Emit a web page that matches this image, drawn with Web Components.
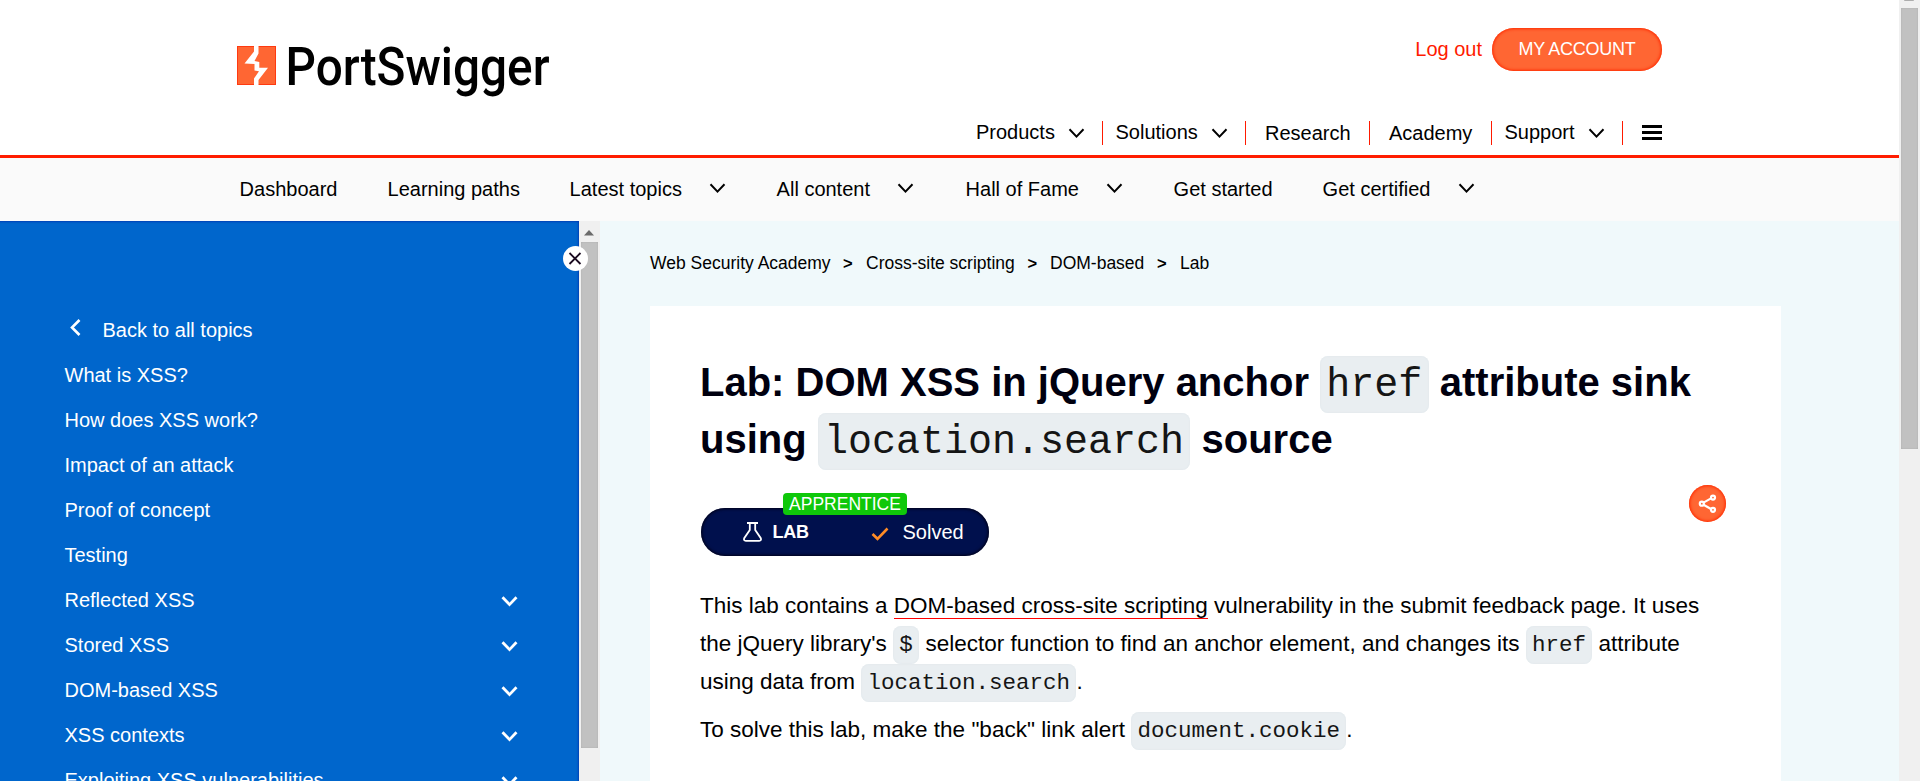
<!DOCTYPE html>
<html lang="en">
<head>
<meta charset="utf-8">
<title>Lab: DOM XSS in jQuery anchor href attribute sink</title>
<style>
html,body{margin:0;height:100%;overflow:hidden}
body{font-family:"Liberation Sans",Arial,sans-serif;color:#000;background:#fff}
</style>
</head>
<body>
<academy-page></academy-page>
<script>
const define = (name, html) => customElements.define(name, class extends HTMLElement {
  constructor() {
    super();
    const t = document.createElement('template');
    t.innerHTML = html;
    this.attachShadow({mode: 'open'}).append(t.content.cloneNode(true));
  }
});

define('chevron-icon', `<style>:host{display:block;width:17px;height:11px;flex:none}svg{display:block}</style>
<svg width="17" height="11" viewBox="0 0 17 11" fill="none" stroke="currentColor"><path d="M1.5 1.3 8.5 8.6 15.5 1.3" style="stroke-width:var(--stroke,2)"/></svg>`);

define('ps-logo', `<style>:host{display:block;width:330px;height:70px}svg{display:block;overflow:visible}</style>
<svg width="330" height="70" viewBox="0 0 330 70">
<rect x="0" y="6" width="39" height="39" fill="#ff3a10"/><rect x="1" y="7" width="37" height="37" fill="#ff6633"/>
<path d="M17 6H21.5V13.5L17.5 21 22.3 22V27.7H31L21.5 40V45H17V38.5L22 31.2 17.5 30.5V24L7.5 23.5 17 11.5Z" fill="#fff"/>
<text x="48.5" y="45" font-family="Roboto,sans-serif" font-size="54.5" font-weight="500" textLength="264" lengthAdjust="spacingAndGlyphs">PortSwigger</text></svg>`);

define('site-header', `<style>
:host{display:flex;flex-direction:column;height:155px;background:#fff;border-bottom:3px solid #ff1c00;font-size:20px}
.top{display:flex;justify-content:space-between;height:110px;padding:0 237px 0 237px}
ps-logo{margin-top:40px}
.acc{display:flex;align-items:flex-start;margin-top:28px;gap:10px}
.out{color:#ff1a00;line-height:43px}
.btn{width:170px;height:43px;line-height:42px;border-radius:22px;background:#ff6633;color:#fff;text-align:center;font-size:18px;letter-spacing:-.25px;box-shadow:inset 0 0 3px 1px #ff2a00}
nav{display:grid;grid-template-columns:127px 143px 124px 122px 131px 39px;justify-content:end;padding-right:237px;margin-top:11px;height:23px;line-height:23px}
.i{display:flex;align-items:center;border-right:1px solid #ff1a00;box-sizing:border-box;padding-left:12.5px;white-space:nowrap}
.i:first-child{padding-left:0}
.i span{margin-top:-1px}
chevron-icon{margin-left:13px}
.i.r{padding-left:19px}.i.r span{margin-top:1px}
.burger{display:flex;flex-direction:column;justify-content:space-between;height:15px;margin:4px 0 0 19px}
.burger i{height:3px;background:#000}
</style>
<div class="top"><ps-logo></ps-logo><div class="acc"><span class="out">Log out</span><span class="btn">MY ACCOUNT</span></div></div>
<nav><div class="i"><span>Products</span><chevron-icon></chevron-icon></div><div class="i"><span>Solutions</span><chevron-icon></chevron-icon></div><div class="i r"><span>Research</span></div><div class="i r"><span>Academy</span></div><div class="i"><span>Support</span><chevron-icon></chevron-icon></div><div class="burger"><i></i><i></i><i></i></div></nav>`);

define('academy-nav', `<style>
:host{display:grid;grid-template-columns:148px 182px 207px 189px 208px 149px 151px;height:63px;padding-left:239.6px;background:#fafafa;font-size:20px;line-height:63px;white-space:nowrap}
div{display:flex}
chevron-icon{margin:25px 0 0 27.4px}
</style>
<div>Dashboard</div><div>Learning paths</div><div>Latest topics<chevron-icon></chevron-icon></div><div>All content<chevron-icon></chevron-icon></div><div>Hall of Fame<chevron-icon></chevron-icon></div><div>Get started</div><div>Get certified<chevron-icon></chevron-icon></div>`);

define('scroll-bar', `<style>
:host{display:block;width:21px;background:#f0f0f0;flex:none;box-sizing:border-box;overflow:hidden}
svg{display:block;margin:var(--arrow-top) auto 0 5px;width:10px;height:6px}
div{width:17px;margin:var(--gap) auto 0;height:var(--thumb);background:#c1c1c1;box-shadow:inset 0 0 2px #aaa}
</style><svg viewBox="0 0 10 6"><path d="M0 5.5 5 0 10 5.5Z" fill="#6b6b6b"/></svg><div></div>`);

define('side-item', `<style>
:host{display:flex;align-items:center;justify-content:space-between;height:45px;color:#fff;font-size:20px;white-space:nowrap;--stroke:2.8}
chevron-icon{display:none}
:host([open]) chevron-icon{display:block;margin-top:1px}
</style><span><slot></slot></span><chevron-icon></chevron-icon>`);

define('topic-sidebar', `<style>
:host{display:flex;width:600px;flex:none;position:relative;height:560px}
.panel{width:579px;background:#0066cc;box-sizing:border-box;padding:87px 61px 0 64.5px;box-shadow:inset -2px 2px 2px -1px #003fb5}
.back{display:flex;align-items:center;height:45px;color:#fff;font-size:20px}
.back svg{margin:-6px 22px 0 5px}
scroll-bar{--arrow-top:9px;--gap:6px;--thumb:506px}
.close{position:absolute;left:563px;top:25px;width:25px;height:25px;border-radius:50%;background:#fff}
.close svg{display:block}
</style>
<div class="panel"><div class="back"><svg width="11" height="17" viewBox="0 0 11 17" fill="none" stroke="#fff" stroke-width="2.6"><path d="M9.5 1 2 8.5 9.5 16"/></svg><span>Back to all topics</span></div>
<side-item>What is XSS?</side-item><side-item>How does XSS work?</side-item><side-item>Impact of an attack</side-item><side-item>Proof of concept</side-item><side-item>Testing</side-item><side-item open>Reflected XSS</side-item><side-item open>Stored XSS</side-item><side-item open>DOM-based XSS</side-item><side-item open>XSS contexts</side-item><side-item open>Exploiting XSS vulnerabilities</side-item></div>
<scroll-bar></scroll-bar>
<div class="close"><svg width="25" height="25" viewBox="0 0 25 25" stroke="#1a0a20" stroke-width="1.8"><path d="M6.5 7 17.5 18M17.5 7 6.5 18"/></svg></div>`);

define('bread-crumbs', `<style>
:host{display:grid;grid-template-columns:193px 23px 161.5px 22.5px 107px 23px auto;height:85px;line-height:84px;font-size:17.5px;white-space:nowrap}
b{font-size:16.5px}
</style><span>Web Security Academy</span><b>&gt;</b><span>Cross-site scripting</span><b>&gt;</b><span>DOM-based</span><b>&gt;</b><span>Lab</span>`);

define('code-chip', `<style>
:host{display:inline-block;box-sizing:border-box;height:38px;line-height:39px;margin:1px 0 -1px;padding:0 6.25px;border-radius:8px;background:#e9eef1;box-shadow:inset 0 0 2px #dde5e9;color:#151515;font-family:"Liberation Mono","Courier New",monospace;font-weight:400;vertical-align:top}
:host([large]){height:57px;line-height:59px;margin:2px 0 -2px}
</style><slot></slot>`);

define('lab-status', `<style>
:host{display:flex;position:relative;box-sizing:border-box;width:288px;height:48px;border-radius:24px;background:#00104d;box-shadow:inset 0 0 3px 1px #000018;color:#fff;align-items:center;padding-left:42px;font-size:20px}
b{font-size:18px;width:98px;margin-left:10.5px;letter-spacing:-.2px}
.tag{position:absolute;left:82px;top:-15px;width:124px;height:22px;line-height:22px;border-radius:4px;background:#0fc80a;font-size:17.5px;text-align:center}
.s{margin-left:14px}
</style>
<svg width="19" height="20" viewBox="0 0 19 20" fill="none" stroke="#fff" stroke-width="1.8"><path d="M4 1H15M6.8 1V8L1.2 16.2Q.4 18.8 2.8 18.8H16.2Q18.6 18.8 17.8 16.2L12.2 8V1"/></svg>
<b>LAB</b><svg width="18" height="14" viewBox="0 0 18 14" fill="none" stroke="#ff8c26" stroke-width="2.6" style="margin-top:3px"><path d="M1.5 7 6.5 11.8 16.5 1.5"/></svg><span class="s">Solved</span><span class="tag">APPRENTICE</span>`);

define('share-button', `<style>:host{display:block;width:37px;height:37px;border-radius:50%;background:#ff6633;box-shadow:inset 0 0 3px 1px #ff2a00}svg{display:block}</style>
<svg width="37" height="37" viewBox="0 0 37 37" fill="none" stroke="#fff" stroke-width="2.2"><path d="M14.5 17.6 22 13.4M14.5 19.8 22 24"/><circle cx="12.8" cy="18.7" r="2"/><circle cx="24" cy="12.6" r="2"/><circle cx="24" cy="24.8" r="2"/></svg>`);

define('lab-article', `<style>
:host{display:block;box-sizing:border-box;width:1131px;height:475px;background:#fff;padding:48px 55px 0 50px;white-space:nowrap}
h1{margin:0;font-size:40px;line-height:57px;height:114px;color:#00000f}
h1 div{height:57px}
.row{display:flex;justify-content:space-between;align-items:flex-start;height:119px;padding-top:17px;box-sizing:border-box}
lab-status{margin:23px 0 0 1px}
</style>
<h1><div>Lab: DOM XSS in jQuery anchor <code-chip large>href</code-chip> attribute sink</div><div>using <code-chip large>location.search</code-chip> source</div></h1>
<div class="row"><lab-status></lab-status><share-button></share-button></div>
<slot></slot>`);

define('lab-text', `<style>
:host{display:block;font-size:22.5px;line-height:38px;margin-bottom:10px;white-space:nowrap}
</style><slot></slot>`);

define('text-link', `<style>:host{border-bottom:1px solid #ff0000}</style><slot></slot>`);

define('academy-page', `<style>
:host{display:flex;height:781px;width:1920px;overflow:hidden}
.main{width:1899px;height:781px;overflow:hidden;flex:none}
.body{display:flex;background:#f0f9fb;height:560px}
.content{padding-left:50px}
scroll-bar{--arrow-top:-5px;--gap:7px;--thumb:441px}
</style>
<div class="main"><site-header></site-header><academy-nav></academy-nav>
<div class="body"><topic-sidebar></topic-sidebar><div class="content"><bread-crumbs></bread-crumbs><lab-article>
<lab-text>This lab contains a <text-link>DOM-based cross-site scripting</text-link> vulnerability in the submit feedback page. It uses<br>the jQuery library's <code-chip>$</code-chip> selector function to find an anchor element, and changes its <code-chip>href</code-chip> attribute<br>using data from <code-chip>location.search</code-chip>.</lab-text>
<lab-text>To solve this lab, make the "back" link alert <code-chip>document.cookie</code-chip>.</lab-text>
</lab-article></div></div></div><scroll-bar></scroll-bar>`);
</script>
</body>
</html>
